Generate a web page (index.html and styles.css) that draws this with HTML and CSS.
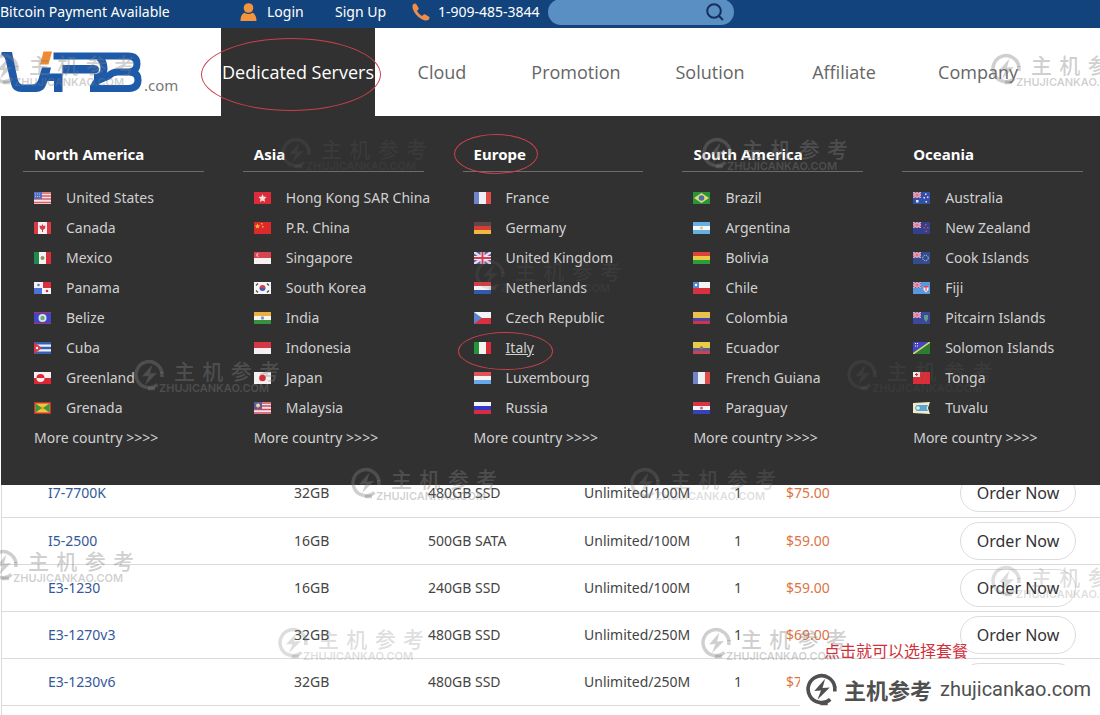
FILE: index.html
```
<!DOCTYPE html>
<html lang="en">
<head>
<meta charset="utf-8">
<title>VPB.com Dedicated Servers</title>
<link rel="stylesheet" href="styles.css">
</head>
<body>
<svg class="defs" aria-hidden="true">
  <symbol id="bolt" viewBox="0 0 32 32"><path d="M24.5 25.500A13 13 0 1 1 28.900 14" fill="none" stroke="currentColor" stroke-width="3.500"/><path d="M28.900 13v5M15 29.500h7" stroke="currentColor" stroke-width="3.500" fill="none"/><path d="M19.500 5.500L9 17.500l6.500-.5L12 26l12-12-7 .5z" fill="currentColor"/></symbol>
  <symbol id="jack" viewBox="0 0 8 6"><path fill="#5a5aa8" d="M0 0h8v6H0z"/><path d="M0 0l8 6M8 0L0 6" stroke="#e3b6cb" stroke-width="1.400"/><path d="M4 0v6M0 3h8" stroke="#f2d3dc" stroke-width="2"/><path d="M4 0v6M0 3h8" stroke="#d8506a"/></symbol>
  <symbol id="us" viewBox="0 0 17 12"><path fill="#f4e6e6" d="M0 0h17v12H0z"/><path d="M0 1h17M0 4h17M0 7h17M0 10.500h17" stroke="#d85c60" stroke-width="1.500"/><path fill="#5570c0" d="M0 0h8v7H0z"/><path d="M1 2h6M1 4.500h6" stroke="#a9b8e6" stroke-dasharray="1 1"/></symbol>
  <symbol id="ca" viewBox="0 0 17 12"><path fill="#f4f0f0" d="M0 0h17v12H0z"/><path fill="#d93a45" d="M0 0h4v12H0zM13 0h4v12h-4zM8.500 2l1 2 2-.5-.5 3-2 1.500V10H8V8L6 6.500l-.5-3 2 .5z"/></symbol>
  <symbol id="mx" viewBox="0 0 17 12"><path fill="#f4f4f0" d="M0 0h17v12H0z"/><path fill="#1f8a50" d="M0 0h5v12H0z"/><path fill="#d6303c" d="M12 0h5v12h-5z"/><circle cx="8.500" cy="6" r="2" fill="#a08a64"/></symbol>
  <symbol id="pa" viewBox="0 0 17 12"><path fill="#f4f4f8" d="M0 0h17v12H0z"/><path fill="#d8303c" d="M9 0h8v6H9z"/><path fill="#4c74d8" d="M0 6h8v6H0z"/><circle cx="4.500" cy="3" r="1.300" fill="#5a80d0"/><circle cx="13" cy="9" r="1.300" fill="#d8303c"/></symbol>
  <symbol id="bz" viewBox="0 0 17 12"><path fill="#3c48c8" d="M0 0h17v12H0z"/><path d="M0 .5h17M0 11.500h17" stroke="#b83058"/><circle cx="8.500" cy="6" r="4" fill="#d8e8f0"/><circle cx="8.500" cy="6" r="2.200" fill="#78a878"/></symbol>
  <symbol id="cu" viewBox="0 0 17 12"><path fill="#eef2fa" d="M0 0h17v12H0z"/><path d="M0 1.200h17M0 6h17M0 10.800h17" stroke="#3560b4" stroke-width="2.400"/><path fill="#d83848" d="M0 0l8 6-8 6z"/><circle cx="3" cy="6" r="1.200" fill="#fff"/></symbol>
  <symbol id="gl" viewBox="0 0 17 12"><path fill="#f6f0f0" d="M0 0h17v6H0z"/><path fill="#dc2634" d="M0 6h17v6H0zM2.500 6a4 4 0 0 1 8 0z"/><path fill="#f6f0f0" d="M2.500 6a4 4 0 0 0 8 0z"/></symbol>
  <symbol id="gd" viewBox="0 0 17 12"><path fill="#c83030" d="M0 0h17v12H0z"/><path fill="#e8c83c" d="M1.500 1.500h14v9h-14z"/><path fill="#3f9440" d="M1.500 1.500L8 6l-6.500 4.500zM15.500 1.500L9 6l6.500 4.500z"/><circle cx="8.500" cy="6" r="1.500" fill="#dca030"/></symbol>
  <symbol id="hk" viewBox="0 0 17 12"><path fill="#dc2c3a" d="M0 0h17v12H0z"/><path fill="#fae0e0" d="M8.500 2l1 2.500 3 .5-2 2 .5 3-2.500-1.500L6 10l.5-3-2-2 3-.5z"/></symbol>
  <symbol id="cn" viewBox="0 0 17 12"><path fill="#dc2a2a" d="M0 0h17v12H0z"/><path fill="#f4b040" d="M3.500 1.500l.8 1.700 1.900.2-1.400 1.300.4 1.900-1.700-1-1.700 1 .4-1.900L.8 3.400l1.900-.2zM7 1h1.500v1.500H7zM8 4h1.500v1.500H8z"/></symbol>
  <symbol id="sg" viewBox="0 0 17 12"><path fill="#f6f2f2" d="M0 0h17v12H0z"/><path fill="#d84450" d="M0 0h17v6H0z"/><circle cx="4" cy="3" r="1.800" fill="#f4c8cc"/><circle cx="5" cy="3" r="1.500" fill="#d84450"/></symbol>
  <symbol id="kr" viewBox="0 0 17 12"><path fill="#f6f6f8" d="M0 0h17v12H0z"/><path fill="#c84450" d="M5.500 6a3 3 0 0 1 6 0z"/><path fill="#4858b0" d="M5.500 6a3 3 0 0 0 6 0z"/><path d="M2 3.500l2-2M13 1.500l2 2M2 8.500l2 2M13 10.500l2-2" stroke="#555" stroke-width="1.500"/></symbol>
  <symbol id="in" viewBox="0 0 17 12"><path fill="#f6f4ee" d="M0 0h17v12H0z"/><path fill="#eab040" d="M0 0h17v4H0z"/><path fill="#38903c" d="M0 8h17v4H0z"/><circle cx="8.500" cy="6" r="1.700" fill="#7898c8"/></symbol>
  <symbol id="id" viewBox="0 0 17 12"><path fill="#f4f0f0" d="M0 0h17v12H0z"/><path fill="#d43844" d="M0 0h17v6H0z"/></symbol>
  <symbol id="jp" viewBox="0 0 17 12"><path fill="#f4f0f0" d="M0 0h17v12H0z"/><circle cx="8.500" cy="6" r="3.300" fill="#d82c3a"/></symbol>
  <symbol id="my" viewBox="0 0 17 12"><path fill="#f4e4ea" d="M0 0h17v12H0z"/><path d="M0 1h17M0 4h17M0 7.500h17M0 11h17" stroke="#d0485c" stroke-width="1.500"/><path fill="#5c5c9c" d="M0 0h8v7H0z"/><circle cx="4" cy="3.500" r="2" fill="#e8d890"/></symbol>
  <symbol id="fr" viewBox="0 0 17 12"><path fill="#eef0f6" d="M0 0h17v12H0z"/><path fill="#7084cc" d="M0 0h5v12H0z"/><path fill="#e04c48" d="M12 0h5v12h-5z"/></symbol>
  <symbol id="de" viewBox="0 0 17 12"><path fill="#5c4844" d="M0 0h17v4H0z"/><path fill="#d83c38" d="M0 4h17v4H0z"/><path fill="#f0b840" d="M0 8h17v4H0z"/></symbol>
  <symbol id="gb" viewBox="0 0 17 12"><path fill="#5c62a8" d="M0 0h17v12H0z"/><path d="M0 0l17 12M17 0L0 12" stroke="#eed8e4" stroke-width="2.400"/><path d="M8.500 0v12M0 6h17" stroke="#f6e8ee" stroke-width="4"/><path d="M8.500 0v12M0 6h17" stroke="#d43c58" stroke-width="2"/></symbol>
  <symbol id="nl" viewBox="0 0 17 12"><path fill="#d83c44" d="M0 0h17v4H0z"/><path fill="#f4f4f8" d="M0 4h17v4H0z"/><path fill="#3458ac" d="M0 8h17v4H0z"/></symbol>
  <symbol id="cz" viewBox="0 0 17 12"><path fill="#f4f4f8" d="M0 0h17v6H0z"/><path fill="#d8303c" d="M0 6h17v6H0z"/><path fill="#5c84c8" d="M0 0l8 6-8 6z"/></symbol>
  <symbol id="it" viewBox="0 0 17 12"><path fill="#f4f4f0" d="M0 0h17v12H0z"/><path fill="#24943c" d="M0 0h5v12H0z"/><path fill="#d82c38" d="M12 0h5v12h-5z"/></symbol>
  <symbol id="lu" viewBox="0 0 17 12"><path fill="#e05454" d="M0 0h17v4H0z"/><path fill="#f4f4f8" d="M0 4h17v4H0z"/><path fill="#68a8e8" d="M0 8h17v4H0z"/></symbol>
  <symbol id="ru" viewBox="0 0 17 12"><path fill="#f4f4f8" d="M0 0h17v4H0z"/><path fill="#3438c8" d="M0 4h17v4H0z"/><path fill="#d82c44" d="M0 8h17v4H0z"/></symbol>
  <symbol id="br" viewBox="0 0 17 12"><path fill="#2c9438" d="M0 0h17v12H0z"/><path fill="#e0dc70" d="M8.500 1L16 6l-7.500 5L1 6z"/><circle cx="8.500" cy="6" r="2.800" fill="#4c6cb0"/></symbol>
  <symbol id="ar" viewBox="0 0 17 12"><path fill="#64b0e4" d="M0 0h17v12H0z"/><path fill="#f4f8fa" d="M0 4h17v4H0z"/><circle cx="8.500" cy="6" r="1.500" fill="#e8c860"/></symbol>
  <symbol id="bo" viewBox="0 0 17 12"><path fill="#dc4438" d="M0 0h17v4H0z"/><path fill="#e8cc48" d="M0 4h17v4H0z"/><path fill="#2c9c34" d="M0 8h17v4H0z"/></symbol>
  <symbol id="cl" viewBox="0 0 17 12"><path fill="#f4f4f8" d="M0 0h17v6H0z"/><path fill="#d8303c" d="M0 6h17v6H0z"/><path fill="#5088cc" d="M0 0h6v6H0z"/><circle cx="3" cy="3" r="1.200" fill="#fff"/></symbol>
  <symbol id="co" viewBox="0 0 17 12"><path fill="#ecc04c" d="M0 0h17v6H0z"/><path fill="#4048b0" d="M0 6h17v3H0z"/><path fill="#d03444" d="M0 9h17v3H0z"/></symbol>
  <symbol id="ec" viewBox="0 0 17 12"><path fill="#e8cc4c" d="M0 0h17v6H0z"/><path fill="#605c90" d="M0 6h17v3H0z"/><path fill="#c84450" d="M0 9h17v3H0z"/><circle cx="8.500" cy="6" r="1.700" fill="#8c7450"/></symbol>
  <symbol id="py" viewBox="0 0 17 12"><path fill="#d83444" d="M0 0h17v4H0z"/><path fill="#f4f4f8" d="M0 4h17v4H0z"/><path fill="#3444b8" d="M0 8h17v4H0z"/><circle cx="8.500" cy="6" r="1.600" fill="#d07078"/></symbol>
  <symbol id="au" viewBox="0 0 17 12"><path fill="#3450a4" d="M0 0h17v12H0z"/><use href="#jack" width="8" height="6"/><path fill="#dce4fa" d="M3 8h2.500v2.500H3zM12 1.500h1.500V3H12zM14 4.500h1.500V6H14zM10.500 5H12v1.500h-1.500zM12.500 9H14v1.500h-1.500z"/></symbol>
  <symbol id="nz" viewBox="0 0 17 12"><path fill="#33408c" d="M0 0h17v12H0z"/><use href="#jack" width="8" height="6"/><path fill="#c04c70" d="M12 2h1.500v1.500H12zM14 5h1.500v1.500H14zM10.500 5H12v1.500h-1.500zM12.500 8.500H14V10h-1.500z"/></symbol>
  <symbol id="ck" viewBox="0 0 17 12"><path fill="#344c8c" d="M0 0h17v12H0z"/><use href="#jack" width="8" height="6"/><circle cx="12.500" cy="6" r="2.800" fill="none" stroke="#c4d4ec" stroke-dasharray="1.200 1"/></symbol>
  <symbol id="fj" viewBox="0 0 17 12"><path fill="#5898e0" d="M0 0h17v12H0z"/><use href="#jack" width="8" height="6"/><path fill="#f4e8ec" d="M10.500 4h5v4l-2.500 2.500L10.500 8z"/><path fill="#d84c58" d="M10.500 4h5v1.500h-5zM12.500 5.500h1V9h-1z"/></symbol>
  <symbol id="pn" viewBox="0 0 17 12"><path fill="#3c489c" d="M0 0h17v12H0z"/><use href="#jack" width="8" height="6"/><path fill="#5c9c88" d="M11 3h4v4l-2 3-2-3z"/></symbol>
  <symbol id="sb" viewBox="0 0 17 12"><path fill="#4444c4" d="M0 0h17L0 12z"/><path fill="#2c7c34" d="M17 0v12H0z"/><path d="M0 12L17 0" stroke="#e0d860" stroke-width="1.500"/><path d="M2 1.500h3M2 4h3" stroke="#fff" stroke-dasharray="1 1"/></symbol>
  <symbol id="to" viewBox="0 0 17 12"><path fill="#dc2c38" d="M0 0h17v12H0z"/><path fill="#f6ecec" d="M0 0h7v5H0z"/><path d="M3.500 1v3M2 2.500h3" stroke="#dc2c38"/></symbol>
  <symbol id="tv" viewBox="0 0 17 12"><path fill="#f0ecc8" d="M0 1l17-1-2 6 2 6-17-1z"/><path fill="#58a4d4" d="M3.500 3H15l-1.500 3L15 9H3.500L2 6z"/><circle cx="5" cy="6" r="1.800" fill="#f0f0e0"/></symbol>
</svg>

<div class="topbar">
  <span class="notice">Bitcoin Payment Available</span>
  <a class="top-link login" href="#"><svg class="icon-user" viewBox="0 0 17 18"><circle cx="8.500" cy="5" r="4.800"/><path d="M.5 18c0-5 2-7.500 4-8.200 2.500 1.700 5.500 1.700 8 0 2 .7 4 3.200 4 8.200z"/></svg>Login</a>
  <a class="top-link signup" href="#">Sign Up</a>
  <a class="top-link phone" href="#"><svg class="icon-phone" viewBox="0 0 18 18"><path d="M1 1.500C2 .3 3.500.2 4.200 1l2.300 3.700c.4.8.2 1.500-.4 2.100L5 7.800c1 2.200 2.900 4.100 5.100 5.200l1.200-1.200c.6-.6 1.400-.7 2.100-.3l3.600 2.200c.8.6.7 2.200-.5 3.100-1.700 1.300-4.500.9-7.500-1C5.500 13.500 2.400 10 1 6.400.3 4.400.2 2.600 1 1.500z"/></svg>1-909-485-3844</a>
  <form class="search">
    <input class="search-input" type="text" aria-label="Search">
    <button class="search-button" type="submit" aria-label="Search"><svg class="icon-search" viewBox="0 0 18 18"><circle cx="8" cy="8" r="6.800"/><path d="M13 13l4 4"/></svg></button>
  </form>
</div>

<header class="header">
  <a class="logo" href="#" aria-label="VPB.com">
    <svg class="logo-mark" viewBox="0 50 143 44"><path fill="#1d5aaa" d="M1.500 52H12l5.500 26.500q1 6 6 6h8q5.500 0 7-5.500L42 67.500h9l-1.500 6H94q5 0 5-4t-5-4.500H62.500V92H54V81h-6.500l-1.500 4q-2.500 7-10 7H21.500q-8.500 0-10.500-8L5.500 60Q4.500 56 1.500 55z"/><g fill="none" stroke="#1d5aaa" stroke-width="7"><path d="M53.500 56H128q9 0 9 8 0 7-7 8 8 .5 8 8 0 8-9 8.500H90"/><path d="M94 77.500q10 0 10-9 0-7-5-11"/><path d="M93.500 90q0-8 7-10.500l8-3.500q4-4 9-4h13"/></g><path fill="#f08a32" d="M43.500 51.500h8.500l-3.500 13H40z"/></svg>
    <span class="logo-suffix">.com</span>
  </a>
  <nav class="nav">
    <a class="nav-item active" href="#">Dedicated Servers</a>
    <a class="nav-item" href="#">Cloud</a>
    <a class="nav-item" href="#">Promotion</a>
    <a class="nav-item" href="#">Solution</a>
    <a class="nav-item" href="#">Affiliate</a>
    <a class="nav-item" href="#">Company</a>
  </nav>
  <div class="mega">
    <section class="region">
      <h2 class="region-title">North America</h2>
      <ul class="countries">
        <li><a href="#"><svg class="flag"><use href="#us"/></svg>United States</a></li>
        <li><a href="#"><svg class="flag"><use href="#ca"/></svg>Canada</a></li>
        <li><a href="#"><svg class="flag"><use href="#mx"/></svg>Mexico</a></li>
        <li><a href="#"><svg class="flag"><use href="#pa"/></svg>Panama</a></li>
        <li><a href="#"><svg class="flag"><use href="#bz"/></svg>Belize</a></li>
        <li><a href="#"><svg class="flag"><use href="#cu"/></svg>Cuba</a></li>
        <li><a href="#"><svg class="flag"><use href="#gl"/></svg>Greenland</a></li>
        <li><a href="#"><svg class="flag"><use href="#gd"/></svg>Grenada</a></li>
        <li><a href="#">More country &gt;&gt;&gt;&gt;</a></li>
      </ul>
    </section>
    <section class="region">
      <h2 class="region-title">Asia</h2>
      <ul class="countries">
        <li><a href="#"><svg class="flag"><use href="#hk"/></svg>Hong Kong SAR China</a></li>
        <li><a href="#"><svg class="flag"><use href="#cn"/></svg>P.R. China</a></li>
        <li><a href="#"><svg class="flag"><use href="#sg"/></svg>Singapore</a></li>
        <li><a href="#"><svg class="flag"><use href="#kr"/></svg>South Korea</a></li>
        <li><a href="#"><svg class="flag"><use href="#in"/></svg>India</a></li>
        <li><a href="#"><svg class="flag"><use href="#id"/></svg>Indonesia</a></li>
        <li><a href="#"><svg class="flag"><use href="#jp"/></svg>Japan</a></li>
        <li><a href="#"><svg class="flag"><use href="#my"/></svg>Malaysia</a></li>
        <li><a href="#">More country &gt;&gt;&gt;&gt;</a></li>
      </ul>
    </section>
    <section class="region">
      <h2 class="region-title"><span class="ringed-title">Europe</span></h2>
      <ul class="countries">
        <li><a href="#"><svg class="flag"><use href="#fr"/></svg>France</a></li>
        <li><a href="#"><svg class="flag"><use href="#de"/></svg>Germany</a></li>
        <li><a href="#"><svg class="flag"><use href="#gb"/></svg>United Kingdom</a></li>
        <li><a href="#"><svg class="flag"><use href="#nl"/></svg>Netherlands</a></li>
        <li><a href="#"><svg class="flag"><use href="#cz"/></svg>Czech Republic</a></li>
        <li><a class="current" href="#"><svg class="flag"><use href="#it"/></svg>Italy</a></li>
        <li><a href="#"><svg class="flag"><use href="#lu"/></svg>Luxembourg</a></li>
        <li><a href="#"><svg class="flag"><use href="#ru"/></svg>Russia</a></li>
        <li><a href="#">More country &gt;&gt;&gt;&gt;</a></li>
      </ul>
    </section>
    <section class="region">
      <h2 class="region-title">South America</h2>
      <ul class="countries">
        <li><a href="#"><svg class="flag"><use href="#br"/></svg>Brazil</a></li>
        <li><a href="#"><svg class="flag"><use href="#ar"/></svg>Argentina</a></li>
        <li><a href="#"><svg class="flag"><use href="#bo"/></svg>Bolivia</a></li>
        <li><a href="#"><svg class="flag"><use href="#cl"/></svg>Chile</a></li>
        <li><a href="#"><svg class="flag"><use href="#co"/></svg>Colombia</a></li>
        <li><a href="#"><svg class="flag"><use href="#ec"/></svg>Ecuador</a></li>
        <li><a href="#"><svg class="flag"><use href="#fr"/></svg>French Guiana</a></li>
        <li><a href="#"><svg class="flag"><use href="#py"/></svg>Paraguay</a></li>
        <li><a href="#">More country &gt;&gt;&gt;&gt;</a></li>
      </ul>
    </section>
    <section class="region">
      <h2 class="region-title">Oceania</h2>
      <ul class="countries">
        <li><a href="#"><svg class="flag"><use href="#au"/></svg>Australia</a></li>
        <li><a href="#"><svg class="flag"><use href="#nz"/></svg>New Zealand</a></li>
        <li><a href="#"><svg class="flag"><use href="#ck"/></svg>Cook Islands</a></li>
        <li><a href="#"><svg class="flag"><use href="#fj"/></svg>Fiji</a></li>
        <li><a href="#"><svg class="flag"><use href="#pn"/></svg>Pitcairn Islands</a></li>
        <li><a href="#"><svg class="flag"><use href="#sb"/></svg>Solomon Islands</a></li>
        <li><a href="#"><svg class="flag"><use href="#to"/></svg>Tonga</a></li>
        <li><a href="#"><svg class="flag"><use href="#tv"/></svg>Tuvalu</a></li>
        <li><a href="#">More country &gt;&gt;&gt;&gt;</a></li>
      </ul>
    </section>
  </div>
</header>

<main class="plans">
  <table class="plan-table">
    <colgroup><col class="c-cpu"><col class="c-ram"><col class="c-disk"><col class="c-net"><col class="c-ip"><col class="c-price"><col class="c-order"></colgroup>
    <tbody>
    <tr><td><a class="cpu" href="#">I7-7700K</a></td><td>32GB</td><td>480GB SSD</td><td>Unlimited/100M</td><td>1</td><td class="price">$75.00</td><td><button class="order">Order Now</button></td></tr>
    <tr><td><a class="cpu" href="#">I5-2500</a></td><td>16GB</td><td>500GB SATA</td><td>Unlimited/100M</td><td>1</td><td class="price">$59.00</td><td><button class="order">Order Now</button></td></tr>
    <tr><td><a class="cpu" href="#">E3-1230</a></td><td>16GB</td><td>240GB SSD</td><td>Unlimited/100M</td><td>1</td><td class="price">$59.00</td><td><button class="order">Order Now</button></td></tr>
    <tr><td><a class="cpu" href="#">E3-1270v3</a></td><td>32GB</td><td>480GB SSD</td><td>Unlimited/250M</td><td>1</td><td class="price">$69.00</td><td><button class="order">Order Now</button></td></tr>
    <tr><td><a class="cpu" href="#">E3-1230v6</a></td><td>32GB</td><td>480GB SSD</td><td>Unlimited/250M</td><td>1</td><td class="price">$7</td><td><button class="order" aria-label="Order"></button></td></tr>
    </tbody>
  </table>
</main>

<div class="overlay">
  <div class="mark m1"><svg class="mark-icon"><use href="#bolt"/></svg><div class="mark-name"><span>主</span><span>机</span><span>参</span><span>考</span></div><div class="mark-url">ZHUJICANKAO.COM</div></div>
  <div class="mark m2"><svg class="mark-icon"><use href="#bolt"/></svg><div class="mark-name"><span>主</span><span>机</span><span>参</span><span>考</span></div><div class="mark-url">ZHUJICANKAO.COM</div></div>
  <div class="mark dark m3"><svg class="mark-icon"><use href="#bolt"/></svg><div class="mark-name"><span>主</span><span>机</span><span>参</span><span>考</span></div><div class="mark-url">ZHUJICANKAO.COM</div></div>
  <div class="mark m4"><svg class="mark-icon"><use href="#bolt"/></svg><div class="mark-name"><span>主</span><span>机</span><span>参</span><span>考</span></div><div class="mark-url">ZHUJICANKAO.COM</div></div>
  <div class="mark dark m5"><svg class="mark-icon"><use href="#bolt"/></svg><div class="mark-name"><span>主</span><span>机</span><span>参</span><span>考</span></div><div class="mark-url">ZHUJICANKAO.COM</div></div>
  <div class="mark m6"><svg class="mark-icon"><use href="#bolt"/></svg><div class="mark-name"><span>主</span><span>机</span><span>参</span><span>考</span></div><div class="mark-url">ZHUJICANKAO.COM</div></div>
  <div class="mark dark m7"><svg class="mark-icon"><use href="#bolt"/></svg><div class="mark-name"><span>主</span><span>机</span><span>参</span><span>考</span></div><div class="mark-url">ZHUJICANKAO.COM</div></div>
  <div class="mark m8"><svg class="mark-icon"><use href="#bolt"/></svg><div class="mark-name"><span>主</span><span>机</span><span>参</span><span>考</span></div><div class="mark-url">ZHUJICANKAO.COM</div></div>
  <div class="mark light m9"><svg class="mark-icon"><use href="#bolt"/></svg><div class="mark-name"><span>主</span><span>机</span><span>参</span><span>考</span></div><div class="mark-url">ZHUJICANKAO.COM</div></div>
  <div class="mark m10"><svg class="mark-icon"><use href="#bolt"/></svg><div class="mark-name"><span>主</span><span>机</span><span>参</span><span>考</span></div><div class="mark-url">ZHUJICANKAO.COM</div></div>
  <div class="mark light m11"><svg class="mark-icon"><use href="#bolt"/></svg><div class="mark-name"><span>主</span><span>机</span><span>参</span><span>考</span></div><div class="mark-url">ZHUJICANKAO.COM</div></div>
  <div class="mark light m12"><svg class="mark-icon"><use href="#bolt"/></svg><div class="mark-name"><span>主</span><span>机</span><span>参</span><span>考</span></div><div class="mark-url">ZHUJICANKAO.COM</div></div>
  <div class="mark m13"><svg class="mark-icon"><use href="#bolt"/></svg><div class="mark-name"><span>主</span><span>机</span><span>参</span><span>考</span></div><div class="mark-url">ZHUJICANKAO.COM</div></div>
  <div class="brand"><svg class="brand-icon"><use href="#bolt"/></svg><strong class="brand-name">主机参考</strong><span class="brand-url">zhujicankao.com</span></div>
  <p class="hint">点击就可以选择套餐</p>
</div>
</body>
</html>
```

FILE: styles.css
```
* { box-sizing: border-box; }

body {
  margin: 0;
  min-height: 100vh;
  display: flex;
  flex-direction: column;
  position: relative;
  background: #fff;
  color: #444;
  font: 14px/20px "Noto Sans", "Noto Sans CJK SC", sans-serif;
}

a { color: inherit; text-decoration: none; }
.defs { position: absolute; width: 0; height: 0; }

/* Top bar */
.topbar {
  display: flex;
  align-items: center;
  height: 28px;
  padding-bottom: 4px;
  background: #13437c;
  color: #fff;
}
.notice { flex: 0 0 240px; }
.top-link { display: flex; align-items: center; white-space: nowrap; }
.login { gap: 10px; flex: 0 0 95px; }
.signup { flex: 0 0 77px; }
.phone { gap: 8px; flex: 0 0 136px; }
.icon-user { width: 17px; height: 18px; fill: #f5943c; }
.icon-phone { width: 18px; height: 18px; fill: #ee8c4c; }
.search {
  display: flex;
  align-items: center;
  width: 186px;
  height: 26px;
  padding-right: 10px;
  border-radius: 13px;
  background: #5a8fc4;
}
.search-input {
  flex: 1;
  min-width: 0;
  padding: 0 12px;
  border: 0;
  outline: 0;
  background: none;
  color: #fff;
  font: inherit;
}
.search-button { display: flex; padding: 0; border: 0; background: none; }
.icon-search { width: 18px; height: 18px; fill: none; stroke: #13305a; stroke-width: 2; }

/* Header and navigation */
.header { position: relative; display: flex; height: 88px; background: #fff; }
.logo { display: flex; flex: 0 0 221px; align-items: flex-end; gap: 1px; padding-bottom: 22px; }
.logo-mark { width: 143px; height: 44px; }
.logo-suffix { color: #777; font-size: 15px; line-height: 18px; }
.nav { display: flex; flex: 1; }
.nav-item {
  display: flex;
  flex: 0 0 134px;
  align-items: center;
  justify-content: center;
  color: #666;
  font-family: "Open Sans", "Noto Sans", sans-serif;
  font-size: 18px;
  white-space: nowrap;
}
.nav-item.active { position: relative; flex-basis: 154px; background: #313131; color: #fff; }

/* Hand-drawn style rings */
.active::after, .ringed-title::after, .current::after {
  content: "";
  position: absolute;
  border: 1px solid #c8414b;
  border-radius: 50%;
}
.active::after { inset: 10px -6px 5px -20px; }
.ringed-title { position: relative; }
.ringed-title::after { inset: -10px -12px -10px -20px; }

/* Country menu */
.mega {
  position: absolute;
  z-index: 1;
  top: 100%;
  left: 1px;
  right: 0;
  display: grid;
  grid-template-columns: repeat(5, minmax(0, 1fr));
  padding: 26px 0 32px;
  background: #313131;
  color: #d0d0d0;
}
.region { padding: 0 17px 0 22px; }
.region-title {
  margin: 0 0 11px;
  padding: 2px 11px 7px;
  border-bottom: 1px solid #6c6c6c;
  color: #fff;
  font-size: 15px;
  line-height: 20px;
}
.countries { margin: 0; padding: 0 0 0 11px; list-style: none; }
.countries a { position: relative; display: flex; align-items: center; height: 30px; white-space: nowrap; }
.flag { flex: none; width: 17px; height: 12px; margin-right: 15px; }
.countries .current { text-decoration: underline; }
.current::after { inset: -1px 90px -7px -16px; }

/* Plans */
.plans { flex: 1; margin-left: 1px; padding-top: 354px; border-left: 1px solid #d8dadc; }
.plan-table { width: 100%; border-collapse: collapse; table-layout: fixed; }
.c-cpu { width: 292px; }
.c-ram { width: 134px; }
.c-disk { width: 156px; }
.c-net { width: 150px; }
.c-ip { width: 52px; }
.c-price { width: 174px; }
.plan-table td { height: 47px; padding: 0; border-bottom: 1px solid #d8dadc; white-space: nowrap; }
.plan-table td:first-child { padding-left: 46px; }
.cpu { color: #33599a; }
.plan-table .price { color: #dc7444; }
.order {
  display: block;
  width: 116px;
  height: 38px;
  padding: 0;
  border: 1px solid #dcdcdc;
  border-radius: 19px;
  background: none;
  color: #333;
  font: 16px/20px "Noto Sans", sans-serif;
}

/* Layer over the page */
.overlay { position: absolute; z-index: 2; inset: 0; overflow: hidden; pointer-events: none; }
.mark {
  position: absolute;
  display: grid;
  grid-template-columns: 26px 15px 106px;
  grid-template-rows: 22px 14px;
  color: #80808060;
}
.mark-icon { grid-area: 1 / 1 / 3 / 3; width: 32px; height: 32px; }
.mark-name {
  grid-area: 1 / 3;
  display: flex;
  justify-content: space-between;
  font: 500 21px/22px "Noto Sans CJK SC", sans-serif;
}
.mark-url { grid-area: 2 / 2 / 3 / 4; font: 600 11px/14px Inter, sans-serif; }
.mark.dark { color: #70707028; }
.mark.light { color: #80808044; }
.m1 { left: -12px; top: 53px; }
.m2 { left: 990px; top: 53px; }
.m3 { left: 280px; top: 137px; }
.m4 { left: 701px; top: 137px; }
.m5 { left: 474px; top: 259px; }
.m6 { left: 133px; top: 359px; }
.m7 { left: 846px; top: 359px; }
.m8 { left: 350px; top: 467px; }
.m9 { left: 629px; top: 467px; }
.m10 { left: -13px; top: 549px; }
.m11 { left: 990px; top: 565px; }
.m12 { left: 277px; top: 627px; }
.m13 { left: 700px; top: 627px; }
.brand {
  position: absolute;
  right: 0;
  bottom: 4px;
  display: flex;
  align-items: center;
  width: 300px;
  height: 46px;
  padding: 2px 0 0 5px;
  background: #fff;
  color: #505050;
  white-space: nowrap;
}
.brand-icon { flex: 0 0 33px; height: 33px; margin-right: 6px; }
.brand-name { margin-right: 8px; font: 700 22px/28px "Noto Sans CJK SC", sans-serif; }
.brand-url { font: 20px/28px Roboto, sans-serif; }
.hint {
  position: absolute;
  left: 824px;
  top: 638px;
  margin: 0;
  color: #d0303c;
  font: 16px/24px "Noto Sans CJK SC", sans-serif;
}
```
